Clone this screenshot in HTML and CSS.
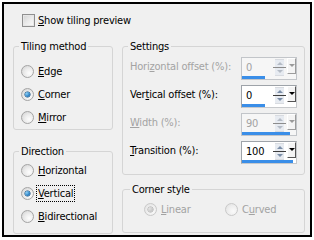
FILE: index.html
```html
<!DOCTYPE html>
<html>
<head>
<meta charset="utf-8">
<link rel="stylesheet" href="styles.css">
</head>
<body>
<div class="frame">
  <div class="check-row"><span class="checkbox"></span><span class="txt"><u>S</u>how tiling preview</span></div>
  <div class="cols">
    <div class="col">
      <fieldset class="group g-tiling">
        <legend>Tiling method</legend>
        <div class="inner">
          <div class="opt"><span class="radio"></span><span class="txt"><u>E</u>dge</span></div>
          <div class="opt"><span class="radio on"></span><span class="txt"><u>C</u>orner</span></div>
          <div class="opt"><span class="radio"></span><span class="txt"><u>M</u>irror</span></div>
        </div>
      </fieldset>
      <fieldset class="group g-dir">
        <legend>Direction</legend>
        <div class="inner">
          <div class="opt"><span class="radio"></span><span class="txt"><u>H</u>orizontal</span></div>
          <div class="opt"><span class="radio on"></span><span class="txt focus"><u>V</u>ertical</span></div>
          <div class="opt"><span class="radio"></span><span class="txt"><u>B</u>idirectional</span></div>
        </div>
      </fieldset>
    </div>
    <div class="col">
      <fieldset class="group g-settings">
        <legend>Settings</legend>
        <div class="inner">
          <div class="row disabled">
            <span class="lbl">Hori<u>z</u>ontal offset (%):</span>
            <div class="spin">
              <div class="spin-top"><span class="val">0</span><span class="arrows"><i class="up"></i><i class="down"></i></span><span class="drop"><i></i></span></div>
              <div class="track"><div class="bar" style="width:23px"></div></div>
            </div>
          </div>
          <div class="row">
            <span class="lbl">Ver<u>t</u>ical offset (%):</span>
            <div class="spin">
              <div class="spin-top"><span class="val">0</span><span class="arrows"><i class="up"></i><i class="down"></i></span><span class="drop"><i></i></span></div>
              <div class="track"><div class="bar" style="width:23px"></div></div>
            </div>
          </div>
          <div class="row disabled">
            <span class="lbl"><u>W</u>idth (%):</span>
            <div class="spin">
              <div class="spin-top"><span class="val">90</span><span class="arrows"><i class="up"></i><i class="down"></i></span><span class="drop"><i></i></span></div>
              <div class="track"><div class="bar" style="width:48px"></div></div>
            </div>
          </div>
          <div class="row">
            <span class="lbl"><u>T</u>ransition (%):</span>
            <div class="spin">
              <div class="spin-top"><span class="val">100</span><span class="arrows"><i class="up"></i><i class="down"></i></span><span class="drop"><i></i></span></div>
              <div class="track"><div class="bar" style="width:51px"></div></div>
            </div>
          </div>
        </div>
      </fieldset>
      <fieldset class="group g-corner">
        <legend>Corner style</legend>
        <div class="inner corner-opts">
          <div class="opt disabled"><span class="radio on"></span><span class="txt"><u>L</u>inear</span></div>
          <div class="opt disabled"><span class="radio"></span><span class="txt">C<u>u</u>rved</span></div>
        </div>
      </fieldset>
    </div>
  </div>
</div>
</body>
</html>
```

FILE: styles.css
```css
body {
  margin: 0;
  background: #fff;
  font-family: "DejaVu Sans Condensed", "DejaVu Sans", sans-serif;
  font-size: 11px;
  letter-spacing: -0.2px;
  color: #000;
}
u { text-decoration: underline; text-underline-offset: 1px; }

.frame {
  margin: 2px;
  width: 310px;
  height: 235px;
  box-sizing: border-box;
  border: 2px solid #000;
  background: #f0f0f0;
  padding: 10px 5px 0 9px;
}

.check-row {
  display: flex;
  align-items: center;
  height: 13px;
  padding-left: 9px;
  gap: 3px;
}
.checkbox {
  width: 13px;
  height: 13px;
  box-sizing: border-box;
  border: 1px solid #8f8f8f;
  background: linear-gradient(135deg, #d2d2d2 0%, #ececec 55%, #fbfbfb 100%);
  box-shadow: inset 0 0 0 1px #e6e6e6;
}
.txt { line-height: 13px; white-space: nowrap; }

.cols {
  display: grid;
  grid-template-columns: 100px 183px;
  column-gap: 9px;
  margin-top: 13px;
}
.col { display: flex; flex-direction: column; }

.group {
  margin: 0;
  padding: 0;
  border: 1px solid #d5d5d5;
  border-radius: 3px;
  box-sizing: border-box;
  min-width: 0;
}
.group legend {
  padding: 0 2px;
  margin-left: 5px;
  line-height: 13px;
  white-space: nowrap;
}
.g-corner legend { margin-left: 7px; }

.g-tiling { height: 90px; }
.g-tiling .inner { padding: 7px 0 0 7px; }
.g-dir { height: 89px; margin-top: 15px; }
.g-dir .inner { padding: 1px 0 0 7px; }
.g-settings { height: 135px; }
.g-settings .inner { padding: 1px 7px 0 7px; }
.g-corner { height: 50px; margin-top: 8px; }
.g-corner .inner { padding: 2px 0 0 21px; }

.opt {
  display: flex;
  align-items: center;
  height: 23px;
  gap: 4px;
}
.opt.disabled { color: #a3a3a3; }

.radio {
  position: relative;
  width: 13px;
  height: 13px;
  box-sizing: border-box;
  border-radius: 50%;
  border: 1px solid #a4a4a4;
  background: radial-gradient(circle at 65% 65%, #fdfdfd 0%, #ececec 45%, #cfcfcf 100%);
  flex: none;
}
.radio.on::after {
  content: "";
  position: absolute;
  left: 3px;
  top: 3px;
  width: 5px;
  height: 5px;
  border-radius: 50%;
  background: radial-gradient(circle at 35% 35%, #8fd0f5 0%, #2f86c9 55%, #0f4d86 100%);
  box-shadow: 0 0 0 0.5px #174d7a;
}
.disabled .radio { border-color: #c9c9c9; background: radial-gradient(circle at 65% 65%, #fafafa 0%, #eeeeee 50%, #dedede 100%); }
.disabled .radio.on::after { background: radial-gradient(circle at 35% 35%, #e4e4e4, #b5b5b5); box-shadow: 0 0 0 0.5px #a9a9a9; }

.focus { outline: 1px dotted #000; outline-offset: 1px; }

.row {
  display: flex;
  align-items: center;
  justify-content: space-between;
  height: 28px;
}
.row .lbl { white-space: nowrap; margin-top: -3px; }
.row.disabled .lbl { color: #a3a3a3; }

.spin {
  width: 56px;
  height: 23px;
  box-sizing: border-box;
  border: 1px solid #9ea3a9;
  border-right-color: #c7c9cc;
  border-bottom-color: #c7c9cc;
  background: #fff;
  display: flex;
  flex-direction: column;
}
.disabled .spin { background: #f6f6f6; border-color: #c2c5c9; }
.spin-top {
  display: flex;
  align-items: flex-start;
  height: 17px;
}
.val { flex: 1; padding: 3px 0 0 4px; line-height: 13px; }
.disabled .val { color: #a3a3a3; }
.arrows {
  width: 9px;
  height: 15px;
  margin-top: 1px;
  display: flex;
  flex-direction: column;
  justify-content: space-between;
  align-items: center;
  border-top: 1px solid #d8dbe0;
  border-bottom: 1px solid #d8dbe0;
  background: #e7ebf1;
  position: relative;
}
.arrows::after {
  content: "";
  position: absolute;
  left: -2px;
  right: -2px;
  top: 7px;
  height: 1px;
  background: #3c3c3c;
}
.disabled .arrows::after { background: #8c8c8c; }
.arrows i {
  width: 0; height: 0;
  border-left: 3px solid transparent;
  border-right: 3px solid transparent;
}
.arrows .up { border-bottom: 3px solid #7b8ea8; margin-top: 2px; }
.arrows .down { border-top: 3px solid #7b8ea8; margin-bottom: 2px; }
.disabled .arrows .up { border-bottom-color: #b5bcc6; }
.disabled .arrows .down { border-top-color: #b5bcc6; }
.drop {
  width: 9px;
  height: 16px;
  margin-left: 3px;
  box-sizing: border-box;
  background: #f4f4f4;
  border-top: 1px solid #fff;
  border-left: 1px solid #fff;
  border-right: 1px solid #555;
  border-bottom: 1px solid #555;
  display: flex;
  justify-content: center;
  padding-top: 5px;
}
.disabled .drop { border-right-color: #9c9c9c; border-bottom-color: #9c9c9c; }
.drop i {
  width: 0; height: 0;
  border-left: 3px solid transparent;
  border-right: 3px solid transparent;
  border-top: 3px solid #000;
}
.disabled .drop i { border-top-color: #9a9a9a; }
.track { height: 4px; padding-top: 1px; box-sizing: border-box; }
.bar { height: 3px; background: #3a8ee8; }

.corner-opts { display: flex; }
.corner-opts .opt:first-child { width: 81px; }
```
